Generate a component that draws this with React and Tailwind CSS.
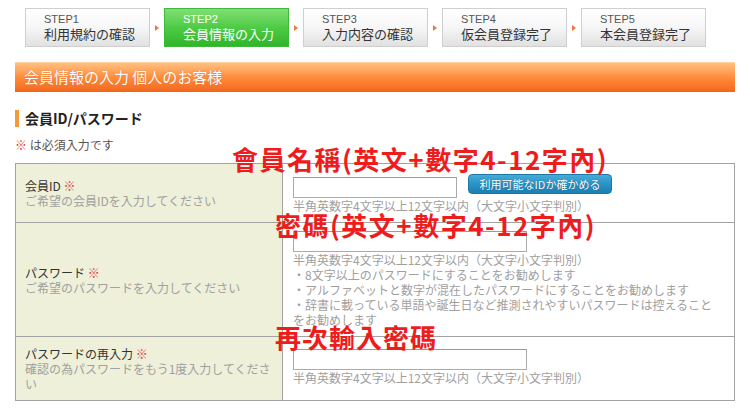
const steps = [
  { no: 'STEP1', title: '利用規約の確認' },
  { no: 'STEP2', title: '会員情報の入力', active: true },
  { no: 'STEP3', title: '入力内容の確認' },
  { no: 'STEP4', title: '仮会員登録完了' },
  { no: 'STEP5', title: '本会員登録完了' },
];

const hint = '半角英数字4文字以上12文字以内（大文字小文字判別）';

function Req() {
  return <span className="text-[#e23a3a]"> ※</span>;
}

function StepBox({ step }) {
  const base = 'w-[125px] h-[39px] pl-[18px] flex flex-col justify-center';
  if (step.active) {
    return (
      <div className={`${base} bg-linear-to-b from-[#7fdf72] via-[#4ecb45] to-[#2fb52c] border border-[#3fb93a] text-white`}>
        <div className="text-[11px] leading-[13px] font-['Liberation_Sans',sans-serif]">{step.no}</div>
        <div className="text-[13px] leading-[16px]">{step.title}</div>
      </div>
    );
  }
  return (
    <div className={`${base} bg-linear-to-b from-white via-[#f6f6f6] to-[#e1e1e1] border border-[#cfcfcf]`}>
      <div className="text-[11px] leading-[13px] text-[#555] font-['Liberation_Sans',sans-serif]">{step.no}</div>
      <div className="text-[13px] leading-[16px] text-[#333]">{step.title}</div>
    </div>
  );
}

function Input({ w = 'w-[234px]' }) {
  return <div className={`${w} h-[21px] bg-white border border-[#ababab] border-t-[#9a9a9a]`} />;
}

export default function App() {
  return (
    <div className="relative w-[750px] h-[411px] overflow-hidden bg-white font-['Noto_Sans_CJK_JP',sans-serif]">
      <div className="px-[15px] pt-[8px]">
        {/* ステップ表示 */}
        <div className="flex items-center pl-[10px]">
          {steps.map((s, i) => (
            <div key={s.no} className="flex items-center">
              {i > 0 && (
                <div className="w-[14px] flex pl-[5px]">
                  <div className="w-0 h-0 border-y-[3px] border-y-transparent border-l-[4px] border-l-[#f0793a]" />
                </div>
              )}
              <StepBox step={s} />
            </div>
          ))}
        </div>

        {/* タイトルバー */}
        <div className="mt-[15px] h-[30px] pl-[9px] flex items-center bg-linear-to-b from-[#ffc080] via-[#ff8c3a] to-[#f2661c] border-t border-[#ffd2a4] text-white text-[15px] [text-shadow:0_0_1px_rgba(160,60,0,0.5)]">
          会員情報の入力 個人のお客様
        </div>

        {/* セクション見出し */}
        <div className="mt-[18px] h-[17px] flex items-center">
          <div className="w-[4px] h-[17px] bg-[#f39a3a]" />
          <div className="ml-[6px] text-[14px] font-bold text-[#222]">会員ID/パスワード</div>
        </div>

        <div className="mt-[10px] h-[16px] text-[12px] leading-[16px] text-[#555]">
          <span className="text-[#e23a3a]">※</span> は必須入力です
        </div>

        {/* 入力テーブル */}
        <div className="mt-[10px] border border-[#a3a3a3] text-[12px] leading-[15px]">
          <div className="grid grid-cols-[266px_1fr] h-[58px]">
            <div className="bg-[#eef0da] pl-[9px] pr-[5px] flex flex-col justify-center">
              <div className="text-[#333]">会員ID<Req /></div>
              <div className="text-[#a0a0a0]">ご希望の会員IDを入力してください</div>
            </div>
            <div className="border-l border-[#a3a3a3] pl-[10px] pr-[10px] pt-[10px]">
              <div className="flex items-start gap-[11px]">
                <div className="mt-[3px]">
                  <Input w="w-[164px]" />
                </div>
                <button className="w-[144px] h-[20px] rounded-[4px] bg-linear-to-b from-[#45acd8] via-[#2a93c6] to-[#1a7fb3] border border-[#1c78a8] text-white text-[11px] leading-[18px] text-center [text-shadow:0_0_1px_rgba(0,40,80,0.6)]">
                  利用可能なIDか確かめる
                </button>
              </div>
              <div className="text-[#a0a0a0]">{hint}</div>
            </div>
          </div>

          <div className="grid grid-cols-[266px_1fr] h-[114px] border-t border-[#a3a3a3]">
            <div className="bg-[#eef0da] pl-[9px] pr-[5px] flex flex-col justify-center">
              <div className="text-[#333]">パスワード<Req /></div>
              <div className="text-[#a0a0a0]">ご希望のパスワードを入力してください</div>
            </div>
            <div className="border-l border-[#a3a3a3] pl-[10px] pr-[10px] pt-[8px] text-[#a0a0a0]">
              <Input />
              <div>{hint}</div>
              <div>・8文字以上のパスワードにすることをお勧めします</div>
              <div>・アルファベットと数字が混在したパスワードにすることをお勧めします</div>
              <div>・辞書に載っている単語や誕生日など推測されやすいパスワードは控えることをお勧めします</div>
            </div>
          </div>

          <div className="grid grid-cols-[266px_1fr] h-[64px] border-t border-[#a3a3a3]">
            <div className="bg-[#eef0da] pl-[9px] pr-[5px] flex flex-col justify-center">
              <div className="text-[#333]">パスワードの再入力<Req /></div>
              <div className="text-[#a0a0a0]">確認の為パスワードをもう1度入力してください</div>
            </div>
            <div className="border-l border-[#a3a3a3] pl-[10px] pr-[10px] pt-[12px] text-[#a0a0a0]">
              <Input />
              <div>{hint}</div>
            </div>
          </div>
        </div>
      </div>

      {/* 赤字の注記（画像上に書き込まれたもの） */}
      <div className="absolute left-[232px] top-[146px] text-[26px] leading-none font-bold tracking-[1.5px] text-[#ee1c1c] font-['Noto_Sans_CJK_TC',sans-serif] whitespace-nowrap">
        會員名稱(英文+數字4-12字內)
      </div>
      <div className="absolute left-[275px] top-[212px] text-[26px] leading-none font-bold tracking-[1.5px] text-[#ee1c1c] font-['Noto_Sans_CJK_TC',sans-serif] whitespace-nowrap">
        密碼(英文+數字4-12字內)
      </div>
      <div className="absolute left-[275px] top-[324px] text-[26px] leading-none font-bold tracking-[1px] text-[#ee1c1c] font-['Noto_Sans_CJK_TC',sans-serif] whitespace-nowrap">
        再次輸入密碼
      </div>
    </div>
  );
}
